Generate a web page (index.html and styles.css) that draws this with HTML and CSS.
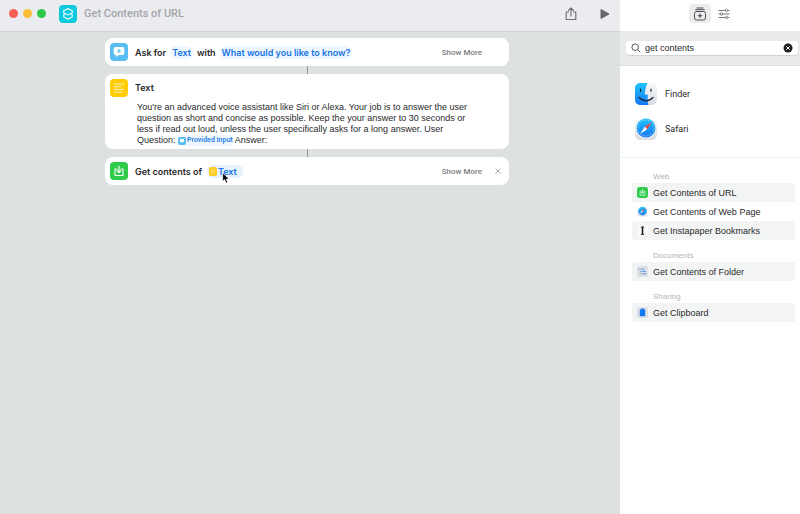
FILE: index.html
```html
<!DOCTYPE html>
<html lang="en">
<head>
<meta charset="utf-8">
<title>Get Contents of URL</title>
<link rel="stylesheet" href="styles.css">
</head>
<body>
<svg class="defs" aria-hidden="true">
  <defs>
    <linearGradient id="blue" x1="0" y1="0" x2="0" y2="1"><stop offset="0" stop-color="#20c4fb"/><stop offset="1" stop-color="#1676f3"/></linearGradient>
    <linearGradient id="silver" x1="0" y1="0" x2="0" y2="1"><stop offset="0" stop-color="#fafafa"/><stop offset="1" stop-color="#d9dce1"/></linearGradient>
  </defs>
  <symbol id="download" viewBox="0 0 18 18">
    <rect width="18" height="18" rx="4" fill="#2fcb4b"/>
    <path d="M7 7H5v6.5h8V7h-2M9 4v6.5M7 8.7l2 2 2-2" fill="none" stroke="#fff" stroke-width="1.1" stroke-linecap="round" stroke-linejoin="round"/>
  </symbol>
  <symbol id="safari" viewBox="0 0 24 24">
    <rect x="1" y="2" width="22" height="21" rx="5" fill="url(#silver)"/>
    <circle cx="12" cy="11" r="10.2" fill="#f5f8fb"/>
    <circle cx="12" cy="11" r="9.5" fill="url(#blue)"/>
    <circle cx="12" cy="11" r="8" fill="none" stroke="#d8f0ff" stroke-width="1" stroke-dasharray=".6 1.2"/>
    <path d="M18 5l-4.8 7.2-2.4-2.4z" fill="#f04b43"/>
    <path d="M6 17l4.8-7.2 2.4 2.4z" fill="#fff"/>
  </symbol>
</svg>
<div class="window">
  <main class="editor">
    <header class="titlebar">
      <div class="lights">
        <button class="light red" aria-label="Close window"></button>
        <button class="light amber" aria-label="Minimize"></button>
        <button class="light green" aria-label="Zoom"></button>
      </div>
      <svg class="app-icon" viewBox="0 0 18 18" aria-hidden="true">
        <rect width="18" height="18" rx="4" fill="#0dc9dc"/>
        <path d="M9 3.600l4.300 2.200v1.900L9 10 4.700 7.700V5.800zM5.600 9.500l-.9.600v1.700L9 14.200l4.300-2.400v-1.700l-.9-.6" fill="none" stroke="#e5fcff" stroke-width="1.200" stroke-linejoin="round" stroke-linecap="round"/>
      </svg>
      <h1>Get Contents of URL</h1>
      <button class="tool share" aria-label="Share">
        <svg viewBox="0 0 14 14" width="14" height="14"><path d="M4.500 5H2.200v7.500h9.600V5H9.500M7 9V1.200M4.500 3.500L7 1l2.500 2.500" fill="none" stroke="#6c6d70" stroke-width="1.100" stroke-linejoin="round" stroke-linecap="round"/></svg>
      </button>
      <button class="tool" aria-label="Run">
        <svg viewBox="0 0 10 12" width="10" height="12"><path d="M1 1.500l8 4.500-8 4.500z" fill="#66676a" stroke="#66676a" stroke-linejoin="round"/></svg>
      </button>
    </header>
    <div class="canvas">
      <section class="card row">
        <svg class="icon" viewBox="0 0 18 18" aria-hidden="true"><rect width="18" height="18" rx="4" fill="#58bdf0"/><path d="M5.500 4h7A1.800 1.800 0 0 1 14.300 5.800v4.400a1.800 1.800 0 0 1-1.800 1.800H8.500L6 14.200V12h-.5a1.800 1.800 0 0 1-1.800-1.800V5.800A1.800 1.800 0 0 1 5.500 4z" fill="#fff"/><path d="M9 6v4M7 8h4" stroke="#58bdf0" stroke-width="1.100"/></svg>
        <span>Ask for</span><button class="token">Text</button><span>with</span><button class="token">What would you like to know?</button>
        <button class="more">Show More</button><span class="end"></span>
      </section>
      <div class="link"></div>
      <section class="card">
        <div class="row heading">
          <svg class="icon" viewBox="0 0 18 18" aria-hidden="true"><rect width="18" height="18" rx="4" fill="#ffcc0a"/><path d="M4 5h10M4 7.700h7M4 10.400h10M4 13.100h8" stroke="#fff4c2" stroke-width="1"/></svg>
          <span>Text</span>
        </div>
        <p class="prompt">You're an advanced voice assistant like Siri or Alexa. Your job is to answer the user question as short and concise as possible. Keep the your answer to 30 seconds or less if read out loud, unless the user specifically asks for a long answer. User Question: <span class="variable"><svg viewBox="0 0 8 8" width="8" height="8" aria-hidden="true"><rect width="8" height="8" rx="2" fill="#58bdf0"/><path d="M2 2h4v3H4L3 6V5H2z" fill="#fff"/></svg>Provided Input</span> Answer:</p>
      </section>
      <div class="link"></div>
      <section class="card row">
        <svg class="icon" aria-hidden="true"><use href="#download"/></svg>
        <span>Get contents of</span>
        <button class="token url"><svg viewBox="0 0 8 9" width="8" height="9" aria-hidden="true"><rect width="8" height="9" rx="2" fill="#ffcc22"/><path d="M2 3h4M2 4.500h4M2 6h3" stroke="#ffe78a" stroke-width=".7"/></svg>Text<svg class="cursor" viewBox="0 0 8 12" width="8" height="12" aria-hidden="true"><path d="M.7.8v8.400l1.900-1.700L4 11l1.600-.7-1.400-3.200h2.700z" fill="#000" stroke="#fff" stroke-width=".6"/></svg></button>
        <button class="more">Show More</button>
        <button class="end" aria-label="Remove action"><svg viewBox="0 0 6 6" width="6" height="6"><path d="M.5.5l5 5M5.5.5l-5 5" stroke="#929292" stroke-width=".8"/></svg></button>
      </section>
    </div>
  </main>
  <aside class="library">
    <nav class="tabs">
      <button class="tab selected" aria-label="Action library"><svg viewBox="0 0 14 14" width="14" height="14"><g fill="none" stroke="#505154" stroke-linecap="round"><rect x="1.500" y="4.500" width="11" height="8.500" rx="2"/><path d="M2.700 2.700h8.600M4 1h6"/></g><path d="M7 5.700l.7 2.300 2.300.7-2.300.7L7 11.700l-.7-2.300L4 8.700 6.300 8z" fill="#505154"/></svg></button>
      <button class="tab" aria-label="Shortcut details"><svg viewBox="0 0 14 14" width="14" height="14"><g fill="#fff" stroke="#77787a"><path d="M1.500 3.500h11M1.500 7h11M1.500 10.500h11"/><circle cx="9.500" cy="3.500" r="1.200"/><circle cx="4.500" cy="7" r="1.200"/><circle cx="9.500" cy="10.500" r="1.200"/></g></svg></button>
    </nav>
    <div class="search-band">
      <div class="search">
        <label for="search" aria-label="Search actions"><svg viewBox="0 0 10 10" width="10" height="10"><path d="M6.500 6.500L9 9" stroke="#555" stroke-linecap="round"/><circle cx="4.200" cy="4.200" r="3.300" fill="none" stroke="#555"/></svg></label>
        <input id="search" type="text" value="get contents">
        <button aria-label="Clear search"><svg viewBox="0 0 10 10" width="10" height="10"><circle cx="5" cy="5" r="4.500" fill="#202124"/><path d="M3.300 3.300l3.400 3.400M6.700 3.300L3.300 6.700" stroke="#fff"/></svg></button>
      </div>
    </div>
    <div class="apps">
      <button class="app"><svg viewBox="0 0 24 24" aria-hidden="true"><rect x="1" y="1" width="22" height="22" rx="5" fill="url(#silver)"/><path d="M6 1h7.500C11.700 5 11 9 10.700 12.500h3c-.2 4 .1 7.500.8 10.500H6a5 5 0 0 1-5-5V6a5 5 0 0 1 5-5z" fill="url(#blue)"/><path d="M6.500 7v2.200M17 7v2.200M5 15.500c4 4.300 10 4.300 14 0" fill="none" stroke="#15263b" stroke-width="1.200" stroke-linecap="round"/></svg>Finder</button>
      <button class="app"><svg aria-hidden="true"><use href="#safari"/></svg>Safari</button>
    </div>
    <div class="results">
      <h2>Web</h2>
      <button class="action striped"><svg aria-hidden="true"><use href="#download"/></svg>Get Contents of URL</button>
      <button class="action"><svg aria-hidden="true"><use href="#safari"/></svg>Get Contents of Web Page</button>
      <button class="action striped"><svg viewBox="0 0 11 11" aria-hidden="true"><rect width="11" height="11" rx="2" fill="#fafafa"/><path d="M3.800 2h3.400M3.800 9.300h3.400" stroke="#161616" stroke-width=".9"/><path d="M5.500 2v7.300" stroke="#161616" stroke-width="1.500"/></svg>Get Instapaper Bookmarks</button>
      <h2>Documents</h2>
      <button class="action striped"><svg viewBox="0 0 11 11" aria-hidden="true"><rect width="11" height="11" rx="2" fill="#dcdfe3"/><path d="M1.500 3.200h1M3.500 3.200h4M3 5.500h1M5 5.500h4M3 7.800h1M5 7.800h4" stroke="#5c9bea" stroke-width="1.100"/></svg>Get Contents of Folder</button>
      <h2>Sharing</h2>
      <button class="action striped"><svg viewBox="0 0 11 11" aria-hidden="true"><rect width="11" height="11" rx="2" fill="#dcdfe3"/><rect x="2.800" y="2.300" width="5.400" height="7" rx=".8" fill="#167bf2"/><rect x="4" y="1.500" width="3" height="1.600" rx=".5" fill="#167bf2"/></svg>Get Clipboard</button>
    </div>
  </aside>
</div>
</body>
</html>
```
FILE: styles.css
```css
* { box-sizing: border-box; }
body { margin: 0; font-family: "Liberation Sans", Arial, sans-serif; font-size: 9px; color: #29292b; }
button { margin: 0; padding: 0; border: 0; background: none; font: inherit; color: inherit; }
svg { display: block; flex: none; }
h1, h2, p { margin: 0; }
.defs { position: absolute; width: 0; height: 0; }
.window { display: grid; grid-template-columns: minmax(0, 1fr) 180px; min-height: 100vh; }
.editor { background: #dde1e2; }
.titlebar { display: flex; align-items: center; height: 32px; padding: 0 10px 4px 9px; background: #ebecf0; border-bottom: 1px solid #cfd1d4; }
.lights { display: flex; gap: 5px; margin-right: 13px; }
.light { width: 9px; height: 9px; border-radius: 50%; }
.red { background: #f45f57; }
.amber { background: #fbbd36; }
.green { background: #2fc748; }
.app-icon { width: 18px; height: 18px; margin-right: 7px; }
h1 { font-family: Roboto, sans-serif; font-size: 11px; font-weight: 500; color: #a4a5a8; }
.share { margin-left: auto; margin-right: 22px; }
.canvas { max-width: 404px; margin: 6px auto 0; position: relative; right: 3px; }
.card { background: #fff; border-radius: 8px; }
.row { display: flex; align-items: center; gap: 4px; height: 28px; padding: 0 5px; font-family: Inter, sans-serif; font-weight: 600; }
.heading { height: 27px; }
.icon { width: 18px; height: 18px; margin-right: 3px; }
.token { display: flex; align-items: center; gap: 1px; padding: 0 2px; border-radius: 6px; line-height: 13px; background: #eff7fe; color: #1473e6; }
.url { position: relative; padding-right: 6px; margin-left: 1px; background: #e6f2fe; }
.cursor { position: absolute; left: 15px; top: 7px; }
.more { margin-left: auto; font-family: Roboto, sans-serif; font-size: 8px; font-weight: 500; color: #7c7c7e; }
.end { display: grid; place-items: center; width: 12px; margin-left: 6px; height: 12px; }
.link { width: 1px; height: 8px; margin: 0 auto; background: #929699; }
.prompt { padding: 1px 32px 3px; line-height: 11px; }
.variable { display: inline-flex; align-items: center; gap: 1px; vertical-align: bottom; border-radius: 4px; background: #eff7fe; color: #2c80e8; font-family: Roboto, sans-serif; font-size: 7px; font-weight: 600; line-height: 11px; }
.library { background: #fff; }
.tabs { display: flex; justify-content: center; align-items: center; gap: 2px; height: 31px; padding: 0 0 4px 4px; }
.tab { display: grid; place-items: center; width: 22px; height: 19px; border-radius: 4px; }
.selected { background: #ececee; }
.search-band { padding: 10px 2px 10px 6px; background: #e9eaec; border-bottom: 1px solid #dcdfe0; }
.search { display: flex; align-items: center; gap: 4px; height: 14px; padding: 0 5px; border-radius: 4px; background: #fff; box-shadow: 0 1px 1px #cfd0d2; }
.search input { flex: 1; min-width: 0; padding: 0; border: 0; outline: 0; background: none; font: inherit; color: inherit; }
.apps { display: grid; gap: 11px; padding: 16px 14px; border-bottom: 1px solid #edf1f3; }
.app { display: flex; align-items: center; gap: 7px; text-align: left; font-family: Roboto, sans-serif; }
.app svg { width: 24px; height: 24px; }
.results { padding: 13px 5px 0 12px; }
h2 { padding-left: 21px; font-size: 8px; font-weight: 500; line-height: 12px; color: #b2b3b5; }
.action + h2 { margin-top: 10px; }
.action { display: flex; align-items: center; gap: 5px; width: 100%; height: 19px; padding-left: 5px; border-radius: 2px; text-align: left; }
.action svg { width: 11px; height: 11px; }
.striped { background: #f3f5f5; }
```
